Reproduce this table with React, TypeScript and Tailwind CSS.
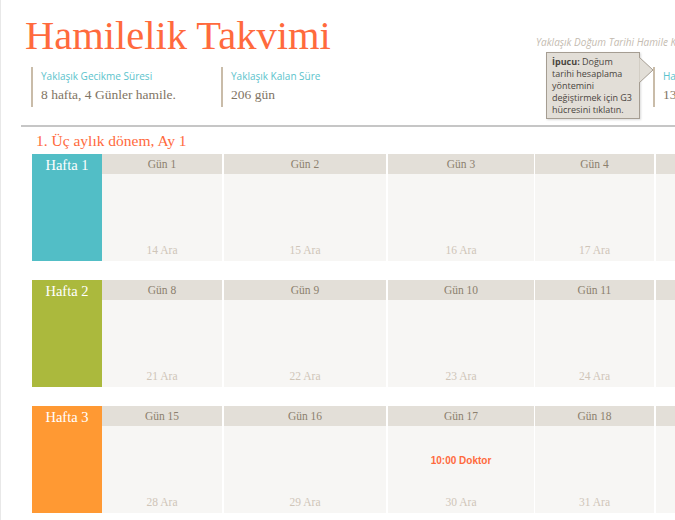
import React from 'react';

type Week = {
  label: string;
  color: string;
  days: { day: string; date: string; note?: string }[];
};

const serif = "font-['Liberation_Serif',serif]";
const sans = "font-['Open_Sans',sans-serif]";

const colWidths = ['w-[120px]', 'ml-[2px] w-[162px]', 'ml-[2px] w-[146px]', 'ml-[1px] w-[119px]', 'ml-[2px] w-[120px]'];

const weeks: Week[] = [
  {
    label: 'Hafta 1',
    color: 'bg-[#52bec6]',
    days: [
      { day: 'Gün 1', date: '14 Ara' },
      { day: 'Gün 2', date: '15 Ara' },
      { day: 'Gün 3', date: '16 Ara' },
      { day: 'Gün 4', date: '17 Ara' },
      { day: 'Gün 5', date: '18 Ara' },
    ],
  },
  {
    label: 'Hafta 2',
    color: 'bg-[#abb93d]',
    days: [
      { day: 'Gün 8', date: '21 Ara' },
      { day: 'Gün 9', date: '22 Ara' },
      { day: 'Gün 10', date: '23 Ara' },
      { day: 'Gün 11', date: '24 Ara' },
      { day: 'Gün 12', date: '25 Ara' },
    ],
  },
  {
    label: 'Hafta 3',
    color: 'bg-[#ff9933]',
    days: [
      { day: 'Gün 15', date: '28 Ara' },
      { day: 'Gün 16', date: '29 Ara' },
      { day: 'Gün 17', date: '30 Ara', note: '10:00 Doktor' },
      { day: 'Gün 18', date: '31 Ara' },
      { day: 'Gün 19', date: '1 Oca' },
    ],
  },
];

const InfoBlock: React.FC<{ label: string; value: string; className: string }> = ({ label, value, className }) => (
  <div className={`h-[40px] shrink-0 border-l-2 border-[#c9bca9] pl-[8px] pt-[2px] ${className}`}>
    <div className={`${sans} text-[10px] leading-[14px] text-[#5bc3cc] whitespace-nowrap`}>{label}</div>
    <div className={`${serif} mt-[4px] text-[13.5px] leading-[16px] text-[#7f7464] whitespace-nowrap`}>{value}</div>
  </div>
);

const WeekRow: React.FC<{ week: Week }> = ({ week }) => (
  <div className="flex h-[107px] pl-[31px]">
    <div className={`w-[70px] shrink-0 ${week.color}`}>
      <div className={`${serif} h-[20px] text-center text-[14.5px] leading-[22px] text-white`}>{week.label}</div>
    </div>
    {week.days.map((d, i) => (
      <div key={d.day} className={`flex shrink-0 flex-col ${colWidths[i]}`}>
        <div className={`${serif} h-[20px] bg-[#e3dfd8] text-center text-[11.5px] leading-[20px] text-[#8c7f6e]`}>
          {d.day}
        </div>
        <div className="flex flex-1 flex-col items-center bg-[#f7f6f4]">
          <div className="flex flex-1 items-center">
            {d.note && (
              <span className={`font-['Liberation_Sans',sans-serif] text-[10px] font-bold text-[#ff6a3d]`}>{d.note}</span>
            )}
          </div>
          <div className={`${serif} pb-[4px] text-[11.5px] leading-[14px] text-[#cfc5b8]`}>{d.date}</div>
        </div>
      </div>
    ))}
  </div>
);

export default function App() {
  return (
    <div className="relative h-[520px] w-[675px] overflow-hidden border-l border-[#e8e8e8] bg-white">
      <div className="flex items-start">
        <h1 className={`${serif} ml-[24px] mt-[13px] w-[511px] shrink-0 text-[40.5px] leading-[46px] text-[#ff6a3d]`}>
          Hamilelik Takvimi
        </h1>
        <div className={`${sans} mt-[35px] whitespace-nowrap text-[10px] italic text-[#c4bbb0]`}>
          Yaklaşık Doğum Tarihi Hamile Kalma Tarihi
        </div>
      </div>

      <div className="mt-[8px] flex pl-[30px]">
        <InfoBlock className="w-[190px]" label="Yaklaşık Gecikme Süresi" value="8 hafta, 4 Günler hamile." />
        <InfoBlock className="w-[432px]" label="Yaklaşık Kalan Süre" value="206 gün" />
        <InfoBlock className="w-[120px]" label="Hamile Kalma Tarihi" value="13 Aralık" />
      </div>

      <div className="ml-[20px] mt-[18px] h-[2px] bg-[#c6c6c6]" />

      <div className={`${serif} ml-[35px] mt-[4px] text-[15.5px] leading-[20px] text-[#ff6a3d]`}>
        1. Üç aylık dönem, Ay 1
      </div>

      <div className="mt-[3px] flex flex-col gap-[19px]">
        {weeks.map((w) => (
          <WeekRow key={w.label} week={w} />
        ))}
      </div>

      {/* tooltip */}
      <div className="absolute left-[545px] top-[52px] h-[67px] w-[94px] border border-[#a59d92] bg-[#e2ded7] pl-[5px] pt-[3px] shadow-[1px_1px_2px_rgba(0,0,0,0.15)]">
        <div className={`${sans} whitespace-nowrap text-[9px] leading-[12px] text-[#4a4540]`}>
          <div>
            <b>İpucu:</b> Doğum
          </div>
          <div>tarihi hesaplama</div>
          <div>yöntemini</div>
          <div>değiştirmek için G3</div>
          <div>hücresini tıklatın.</div>
        </div>
        <svg className="absolute left-[92px] top-[4px]" width="16" height="26" viewBox="0 0 16 26">
          <polygon points="0,0 14,13 0,26" fill="#e2ded7" stroke="#a59d92" strokeWidth="1" />
          <rect x="-1" y="1" width="1.5" height="24" fill="#e2ded7" />
        </svg>
      </div>
    </div>
  );
}
